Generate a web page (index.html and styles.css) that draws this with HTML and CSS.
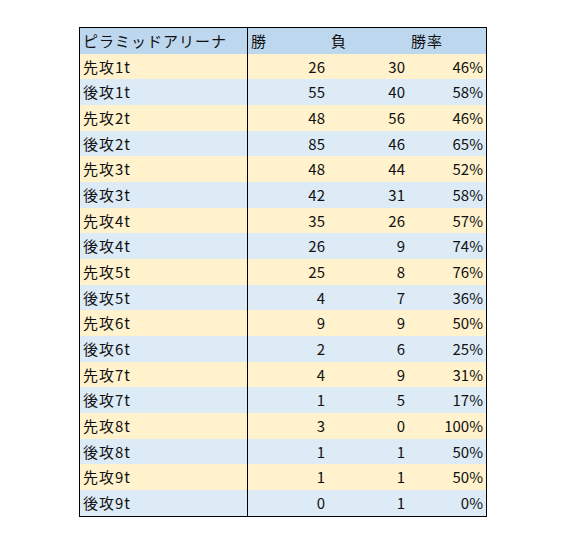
FILE: index.html
```html
<!DOCTYPE html>
<html lang="ja">
<head>
<meta charset="utf-8">
<title>ピラミッドアリーナ</title>
<link rel="stylesheet" href="styles.css">
</head>
<body>
<table class="stats">
  <colgroup>
    <col class="c-name"><col class="c-num"><col class="c-num"><col class="c-rate">
  </colgroup>
  <thead>
    <tr class="head"><th class="name">ピラミッドアリーナ</th><th>勝</th><th>負</th><th>勝率</th></tr>
  </thead>
  <tbody>
    <tr class="y"><td class="name">先攻1t</td><td>26</td><td>30</td><td>46%</td></tr>
    <tr class="b"><td class="name">後攻1t</td><td>55</td><td>40</td><td>58%</td></tr>
    <tr class="y"><td class="name">先攻2t</td><td>48</td><td>56</td><td>46%</td></tr>
    <tr class="b"><td class="name">後攻2t</td><td>85</td><td>46</td><td>65%</td></tr>
    <tr class="y"><td class="name">先攻3t</td><td>48</td><td>44</td><td>52%</td></tr>
    <tr class="b"><td class="name">後攻3t</td><td>42</td><td>31</td><td>58%</td></tr>
    <tr class="y"><td class="name">先攻4t</td><td>35</td><td>26</td><td>57%</td></tr>
    <tr class="b"><td class="name">後攻4t</td><td>26</td><td>9</td><td>74%</td></tr>
    <tr class="y"><td class="name">先攻5t</td><td>25</td><td>8</td><td>76%</td></tr>
    <tr class="b"><td class="name">後攻5t</td><td>4</td><td>7</td><td>36%</td></tr>
    <tr class="y"><td class="name">先攻6t</td><td>9</td><td>9</td><td>50%</td></tr>
    <tr class="b"><td class="name">後攻6t</td><td>2</td><td>6</td><td>25%</td></tr>
    <tr class="y"><td class="name">先攻7t</td><td>4</td><td>9</td><td>31%</td></tr>
    <tr class="b"><td class="name">後攻7t</td><td>1</td><td>5</td><td>17%</td></tr>
    <tr class="y"><td class="name">先攻8t</td><td>3</td><td>0</td><td>100%</td></tr>
    <tr class="b"><td class="name">後攻8t</td><td>1</td><td>1</td><td>50%</td></tr>
    <tr class="y"><td class="name">先攻9t</td><td>1</td><td>1</td><td>50%</td></tr>
    <tr class="b"><td class="name">後攻9t</td><td>0</td><td>1</td><td>0%</td></tr>
  </tbody>
</table>
</body>
</html>
```
FILE: styles.css
```css
html, body {
  margin: 0;
  padding: 0;
  background: #ffffff;
}
body {
  padding: 27px 0 0 79px;
  font-family: "Noto Sans CJK JP", "Noto Sans", sans-serif;
  font-size: 15px;
  color: #111111;
}
.stats {
  border-collapse: separate;
  border-spacing: 0;
  border: 1px solid #000000;
  table-layout: fixed;
  width: 408px;
}
.c-name { width: 168px; }
.c-num { width: 80px; }
.c-rate { width: 78px; }
.stats th,
.stats td {
  height: 25.68px;
  padding: 0 3px 0 0;
  line-height: 20px;
  vertical-align: middle;
  white-space: nowrap;
  overflow: hidden;
}
.stats td {
  text-align: right;
}
.stats th {
  font-weight: normal;
  text-align: left;
  padding-left: 3px;
  letter-spacing: 1px;
}
.stats .name {
  text-align: left;
  padding-left: 3px;
  letter-spacing: 1px;
  border-right: 1px solid #000000;
}
.head { background: #bdd7ee; }
.y { background: #fff2cc; }
.b { background: #ddebf7; }
```
